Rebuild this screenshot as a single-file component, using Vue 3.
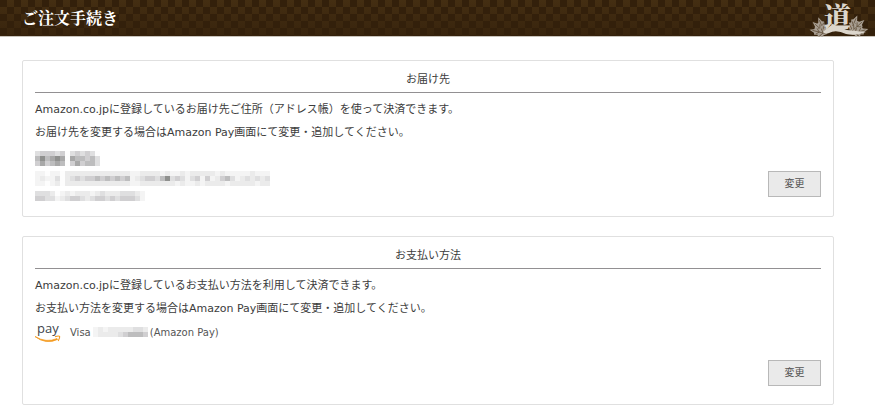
<template>
  <header class="topbar">
    <h1 class="topbar-title">ご注文手続き</h1>
    <svg class="crest" viewBox="0 0 62 36" aria-hidden="true">
      <g v-for="leaf in leaves" :key="leaf.x + '-' + leaf.r" :transform="`translate(${leaf.x} ${leaf.y}) rotate(${leaf.r})`">
        <path class="crest-leaf" d="M0 0 L-2 -3 L-4 -4 L-3 -6 L-5 -8 L-3 -9 L-4 -12 L-2 -13 L0 -18 L2 -13 L4 -12 L3 -9 L5 -8 L3 -6 L4 -4 L2 -3 Z" />
        <path class="crest-vein" d="M0 0 V-15 M0 -4 L-4 -7 M0 -4 L4 -7 M0 -8 L-3 -11 M0 -8 L3 -11" />
      </g>
      <text x="16" y="27" class="crest-mark">道</text>
      <path class="crest-stroke" d="M15 32 Q19 28 25 24 L28 26 Q34 28 39 30 Q48 31 58 32 Q48 36 38 34 Q28 29 21 33 Q17 35 15 32 Z" />
    </svg>
  </header>

  <main class="page">
    <section class="card">
      <h2 class="card-title">お届け先</h2>
      <p class="note">Amazon.co.jpに登録しているお届け先ご住所（アドレス帳）を使って決済できます。</p>
      <p class="note">お届け先を変更する場合はAmazon Pay画面にて変更・追加してください。</p>
      <div class="card-body">
        <div class="masked">
          <svg v-for="row in address" :key="row.name" class="mask" :width="row.tones[0].length * 5" :height="row.tones.length * 5" shape-rendering="crispEdges" aria-hidden="true">
            <template v-for="(line, y) in row.tones" :key="y">
              <rect v-for="(tone, x) in line" :key="x" :x="x * 5" :y="y * 5" width="5" height="5" :fill="shades[tone]" />
            </template>
          </svg>
        </div>
        <button type="button" class="change">変更</button>
      </div>
    </section>

    <section class="card">
      <h2 class="card-title">お支払い方法</h2>
      <p class="note">Amazon.co.jpに登録しているお支払い方法を利用して決済できます。</p>
      <p class="note">お支払い方法を変更する場合はAmazon Pay画面にて変更・追加してください。</p>
      <div class="payment">
        <svg class="pay-logo" viewBox="0 0 26 22" role="img" aria-label="Amazon Pay">
          <text x="2" y="12" class="pay-word">pay</text>
          <path d="M0 15.5 Q11 22.2 22 17.6 L22.6 18.4 Q11 24 0 15.5 Z" fill="#f49b20" stroke="#f49b20" stroke-width=".8" />
          <path d="M20 15.6 Q24 14.6 24.6 15.4 Q25 17 23.2 20" fill="none" stroke="#f49b20" stroke-width="1.2" />
        </svg>
        <span>Visa</span>
        <svg class="mask" width="55" height="10" shape-rendering="crispEdges" aria-hidden="true">
          <template v-for="(line, y) in cardNumber" :key="y">
            <rect v-for="(tone, x) in line" :key="x" :x="x * 5" :y="y * 5" width="5" height="5" :fill="shades[tone]" />
          </template>
        </svg>
        <span>(Amazon Pay)</span>
      </div>
      <div class="card-foot">
        <button type="button" class="change">変更</button>
      </div>
    </section>
  </main>
</template>

<script setup>
// 0 is the lightest tone of a mosaic cell, 7 the darkest
const shades = ['#fdfdfd', '#f4f4f4', '#ebebeb', '#dfdfe0', '#d0cfd1', '#bdbdbe', '#a8a8a8', '#8f908e'];

const address = [
  {
    name: 'name',
    tones: ['3444340343430', '5756760655453', '4645650464553']
  },
  {
    name: 'address',
    tones: [
      '11011022222222222221122221211212222212111112111',
      '12113023434454545451234435734313414124531232323',
      '11012022222222222221122222221211212222122222122'
    ]
  },
  {
    name: 'phone',
    tones: ['3332012122212322233321', '4433123443234434344431']
  }
];

const cardNumber = ['12122222332', '12222345554'];

const leaves = [
  { x: 17, y: 34, r: -22 },
  { x: 18, y: 34, r: -48 },
  { x: 19, y: 34, r: -76 },
  { x: 42, y: 32, r: 24 },
  { x: 43, y: 32, r: 48 },
  { x: 43, y: 34, r: 74 }
];
</script>

<style>
body {
  margin: 0;
  background: #fff;
}
</style>

<style scoped>
.topbar {
  display: flex;
  align-items: center;
  justify-content: space-between;
  height: 37px;
  padding: 0 5px 0 22px;
  background:
    linear-gradient(rgba(51, 32, 11, 0), rgba(51, 32, 11, 0.7)),
    repeating-conic-gradient(#442e12 0 25%, #33200b 0 50%) 0 0 / 14px 14px;
  border-bottom: 1px solid #c9c4bc;
  box-sizing: border-box;
}
.topbar-title {
  margin: 0;
  color: #fff;
  font-family: "Noto Serif CJK JP", "Liberation Serif", "Noto Sans CJK JP", serif;
  font-size: 16px;
  line-height: 24px;
  font-weight: 700;
}
.crest {
  width: 62px;
  height: 36px;
  overflow: visible;
}
.crest-mark {
  fill: #dcd6cc;
  font-family: "Noto Serif CJK JP", "Noto Sans CJK JP", serif;
  font-size: 27px;
  line-height: 27px;
  font-weight: 900;
}
.crest-stroke {
  fill: #dcd6cc;
}
.crest-leaf {
  fill: #a89e92;
}
.crest-vein {
  fill: none;
  stroke: #5c4a33;
  stroke-width: 0.7;
}
.page {
  display: flex;
  flex-direction: column;
  gap: 19px;
  padding: 23px 41px 15px 22px;
  color: #3c3c3c;
  font-family: "DejaVu Sans", "Noto Sans CJK JP", sans-serif;
  font-size: 11px;
}
.card {
  padding: 9px 12px 12px;
  border: 1px solid #e0e0e0;
  border-radius: 2px;
}
.card-title {
  margin: 0 0 5px;
  padding-bottom: 2px;
  border-bottom: 1px solid #929092;
  font-size: 11px;
  line-height: 20px;
  font-weight: 400;
  text-align: center;
}
.note {
  margin: 0;
  line-height: 23px;
}
.card-body {
  display: flex;
  align-items: center;
  justify-content: space-between;
  padding: 7px 0 3px;
}
.card-body .change {
  margin-top: 16px;
}
.masked {
  display: flex;
  flex-direction: column;
  gap: 5px;
}
.mask {
  display: block;
  flex: none;
}
.change {
  width: 53px;
  height: 26px;
  padding: 0;
  border: 1px solid #b8b8b8;
  background: #eaeaea;
  color: #555;
  font-family: "DejaVu Sans", "Noto Sans CJK JP", sans-serif;
  font-size: 10px;
  line-height: 20px;
}
.payment {
  display: flex;
  align-items: center;
  gap: 2px;
  height: 24px;
  color: #555;
  font-size: 10px;
}
.pay-logo {
  width: 26px;
  height: 22px;
  margin-right: 7px;
  overflow: visible;
}
.pay-word {
  fill: #3d454c;
  font-family: "Open Sans", sans-serif;
  font-size: 13px;
  line-height: 13px;
  font-weight: 500;
}
.card-foot {
  display: flex;
  justify-content: flex-end;
  padding: 16px 0 6px;
}
</style>
